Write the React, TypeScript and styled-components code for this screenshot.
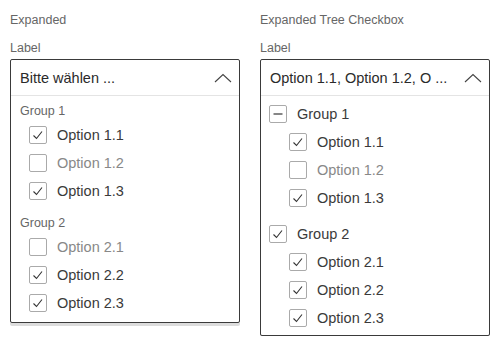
import React from "react"
import styled, { createGlobalStyle } from "styled-components"

interface OptionItem {
  label: string
  checked: boolean
}

interface GroupItem {
  label: string
  state: "checked" | "partial" | "none"
  options: OptionItem[]
}

const groupsA: GroupItem[] = [
  {
    label: "Group 1",
    state: "partial",
    options: [
      { label: "Option 1.1", checked: true },
      { label: "Option 1.2", checked: false },
      { label: "Option 1.3", checked: true },
    ],
  },
  {
    label: "Group 2",
    state: "partial",
    options: [
      { label: "Option 2.1", checked: false },
      { label: "Option 2.2", checked: true },
      { label: "Option 2.3", checked: true },
    ],
  },
]

const groupsB: GroupItem[] = [
  {
    label: "Group 1",
    state: "partial",
    options: [
      { label: "Option 1.1", checked: true },
      { label: "Option 1.2", checked: false },
      { label: "Option 1.3", checked: true },
    ],
  },
  {
    label: "Group 2",
    state: "checked",
    options: [
      { label: "Option 2.1", checked: true },
      { label: "Option 2.2", checked: true },
      { label: "Option 2.3", checked: true },
    ],
  },
]

const Check: React.FC<{ state: "checked" | "partial" | "none" }> = ({ state }) => (
  <Box>
    {state === "checked" && (
      <svg width="18" height="18" viewBox="0 0 18 18">
        <path d="M4.5 9.5 L7.5 12.5 L13 5.5" fill="none" stroke="#333" strokeWidth="1.1" />
      </svg>
    )}
    {state === "partial" && (
      <svg width="18" height="18" viewBox="0 0 18 18">
        <path d="M4.5 9 H13.5" fill="none" stroke="#444" strokeWidth="1.3" />
      </svg>
    )}
  </Box>
)

const Chevron = () => (
  <svg width="18" height="10" viewBox="0 0 18 10">
    <path d="M1 9 L9 1.5 L17 9" fill="none" stroke="#444" strokeWidth="1.1" />
  </svg>
)

const App: React.FC = () => (
  <>
    <GlobalStyle />
    <Page>
      <Column>
        <Title>Expanded</Title>
        <FieldLabel>Label</FieldLabel>
        <Panel>
          <Header>
            <HeaderText>Bitte wählen ...</HeaderText>
            <Chevron />
          </Header>
          <List $top={5} $bottom={5}>
            {groupsA.map((g, gi) => (
              <Group key={g.label} $first={gi === 0}>
                <GroupLabel>{g.label}</GroupLabel>
                {g.options.map((o) => (
                  <Row key={o.label} $indent={18}>
                    <Check state={o.checked ? "checked" : "none"} />
                    <OptionText $muted={!o.checked}>{o.label}</OptionText>
                  </Row>
                ))}
              </Group>
            ))}
          </List>
        </Panel>
      </Column>
      <Column>
        <Title>Expanded Tree Checkbox</Title>
        <FieldLabel>Label</FieldLabel>
        <Panel>
          <Header>
            <HeaderText>Option 1.1, Option 1.2, O ...</HeaderText>
            <Chevron />
          </Header>
          <List $top={4} $bottom={3}>
            {groupsB.map((g, gi) => (
              <Group key={g.label} $first={gi === 0}>
                <Row $indent={8}>
                  <Check state={g.state} />
                  <OptionText>{g.label}</OptionText>
                </Row>
                {g.options.map((o) => (
                  <Row key={o.label} $indent={28}>
                    <Check state={o.checked ? "checked" : "none"} />
                    <OptionText $muted={!o.checked}>{o.label}</OptionText>
                  </Row>
                ))}
              </Group>
            ))}
          </List>
        </Panel>
      </Column>
    </Page>
  </>
)

export default App

const GlobalStyle = createGlobalStyle`
  body {
    margin: 0;
    background: #fff;
    font-family: "Liberation Sans", Arial, sans-serif;
  }
`

const Page = styled.div`
  display: grid;
  grid-template-columns: 230px 230px;
  gap: 20px;
  padding: 12px 10px 0;
  align-items: start;
`

const Column = styled.div`
  display: flex;
  flex-direction: column;
`

const Title = styled.div`
  font-size: 12.5px;
  color: #666;
  line-height: 16px;
`

const FieldLabel = styled.div`
  font-size: 12.5px;
  color: #666;
  line-height: 16px;
  margin-top: 12px;
  margin-bottom: 3px;
`

const Panel = styled.div`
  border: 1px solid #3a3a3a;
  border-radius: 2px;
  background: #fff;
  box-shadow: 0 3px 0 0 #dcdcdc;
`

const Header = styled.div`
  height: 35px;
  display: flex;
  align-items: center;
  justify-content: space-between;
  padding: 0 7px 0 9px;
  border-bottom: 1px solid #e4e4e4;
`

const HeaderText = styled.span`
  font-size: 14.5px;
  color: #2a2a2a;
  white-space: nowrap;
`

const List = styled.div<{ $top: number; $bottom: number }>`
  padding: ${({ $top }) => $top}px 0 ${({ $bottom }) => $bottom}px;
  display: flex;
  flex-direction: column;
`

const Group = styled.div<{ $first: boolean }>`
  display: flex;
  flex-direction: column;
  margin-top: ${({ $first }) => ($first ? 0 : 8)}px;
`

const GroupLabel = styled.div`
  font-size: 12.5px;
  color: #666;
  line-height: 20px;
  padding-left: 9px;
`

const Row = styled.div<{ $indent: number }>`
  height: 28px;
  display: flex;
  align-items: center;
  gap: 10px;
  padding-left: ${({ $indent }) => $indent}px;
`

const Box = styled.span`
  width: 18px;
  height: 18px;
  box-sizing: border-box;
  border: 1px solid #aaa;
  border-radius: 2px;
  display: flex;
  align-items: center;
  justify-content: center;
  flex-shrink: 0;

  svg {
    display: block;
    margin: -1px;
  }
`

const OptionText = styled.span<{ $muted?: boolean }>`
  font-size: 14.5px;
  color: ${({ $muted }) => ($muted ? "#888" : "#3a3a3a")};
`
